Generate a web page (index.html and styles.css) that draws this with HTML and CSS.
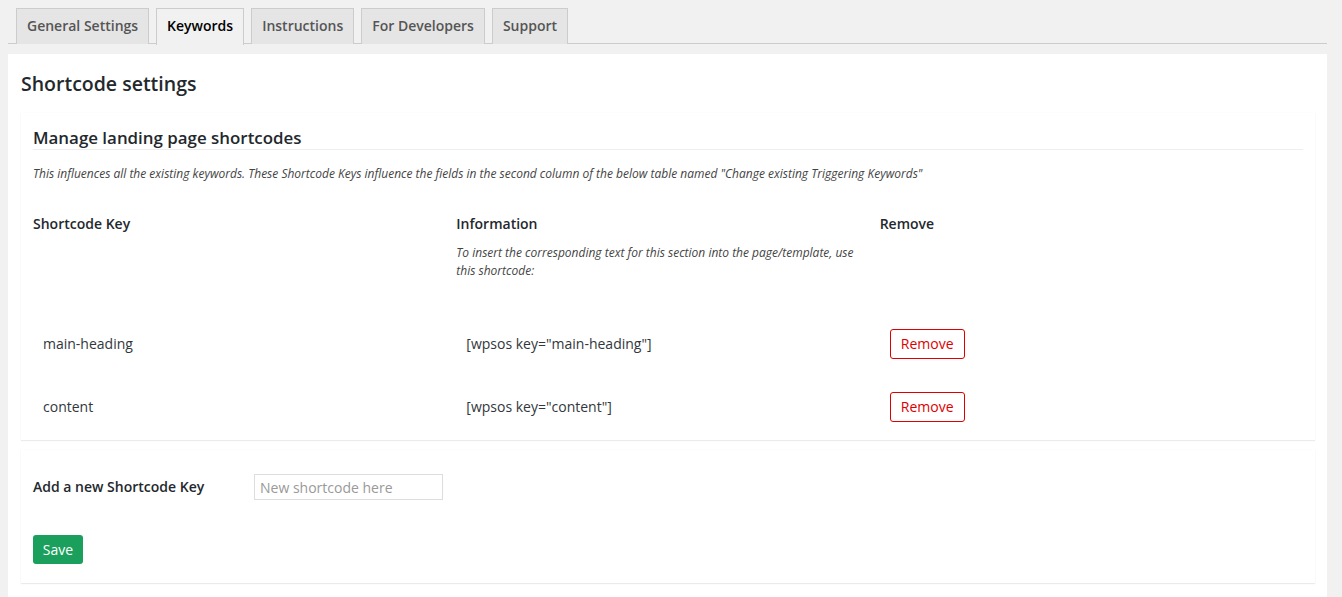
FILE: index.html
```html
<!DOCTYPE html>
<html lang="en">
<head>
<meta charset="utf-8">
<title>Shortcode settings</title>
<link rel="stylesheet" href="styles.css">
</head>
<body>
<div class="wrap">
  <nav class="tabs">
    <a class="tab">General Settings</a>
    <a class="tab active">Keywords</a>
    <a class="tab">Instructions</a>
    <a class="tab">For Developers</a>
    <a class="tab">Support</a>
  </nav>
  <main class="panel">
    <h2 class="title">Shortcode settings</h2>
    <section class="card card-table">
      <h3 class="card-title">Manage landing page shortcodes</h3>
      <p class="desc">This influences all the existing keywords. These Shortcode Keys influence the fields in the second column of the below table named "Change existing Triggering Keywords"</p>
      <div class="table">
        <div class="th">Shortcode Key</div>
        <div class="th">Information
          <p class="hint">To insert the corresponding text for this section into the page/template, use this shortcode:</p>
        </div>
        <div class="th">Remove</div>

        <div class="td">main-heading</div>
        <div class="td">[wpsos key="main-heading"]</div>
        <div class="td"><button class="btn-remove">Remove</button></div>

        <div class="td">content</div>
        <div class="td">[wpsos key="content"]</div>
        <div class="td"><button class="btn-remove">Remove</button></div>
      </div>
    </section>
    <section class="card card-add">
      <div class="add-row">
        <label class="add-label" for="newkey">Add a new Shortcode Key</label>
        <input id="newkey" class="add-input" type="text" placeholder="New shortcode here">
      </div>
      <button class="btn-save">Save</button>
    </section>
  </main>
</div>
</body>
</html>
```

FILE: styles.css
```css
* { box-sizing: border-box; }
html, body { margin: 0; padding: 0; }
body {
  background: #f1f1f1;
  font-family: "Open Sans", "Liberation Sans", sans-serif;
  font-size: 14px;
  color: #444;
  height: 597px;
  overflow: hidden;
}
.wrap {
  padding: 8px 15px 0 8px;
}
.tabs {
  display: flex;
  gap: 7px;
  padding-left: 8px;
  border-bottom: 1px solid #ccc;
  height: 36px;
}
.tab {
  display: block;
  height: 36px;
  padding: 5px 10px;
  font-size: 14px;
  line-height: 24px;
  font-weight: 600;
  color: #555;
  background: #e5e5e5;
  border: 1px solid #ccc;
  border-bottom: none;
}
.tab.active {
  background: #f1f1f1;
  color: #000;
  height: 37px;
}
.panel {
  margin-top: 10px;
  background: #fff;
  padding: 13px 12px 20px 13px;
  height: 600px;
}
.title {
  margin: 0;
  font-size: 19.5px;
  line-height: 34px;
  font-weight: 600;
  color: #23282d;
}
.card {
  background: #fff;
  box-shadow: 0 1px 1px rgba(0,0,0,0.07), 0 0 1px rgba(0,0,0,0.05);
  padding: 0 12px;
}
.card-table {
  margin-top: 12px;
  padding-top: 14px;
  padding-bottom: 2px;
}
.card-title {
  margin: 0;
  font-size: 16.9px;
  line-height: 22px;
  font-weight: 600;
  color: #23282d;
  border-bottom: 1px solid #eee;
}
.desc {
  margin: 15px 0 0;
  font-size: 12px;
  font-style: italic;
  line-height: 18px;
  color: #444;
}
.table {
  display: grid;
  grid-template-columns: 1fr 1fr 1fr;
  margin-top: 31px;
}
.th {
  font-weight: 600;
  font-size: 14px;
  line-height: 20px;
  color: #23282d;
  padding-bottom: 32px;
}
.hint {
  margin: 10px 0 0;
  font-weight: 400;
  font-style: italic;
  font-size: 12px;
  line-height: 18px;
  color: #444;
  max-width: 400px;
}
.td {
  height: 63px;
  padding-left: 10px;
  display: flex;
  align-items: center;
  font-size: 14px;
  color: #32373c;
}
.btn-remove {
  font-family: inherit;
  font-size: 14px;
  height: 30px;
  width: 75px;
  padding: 0;
  background: #fff;
  color: #dd0000;
  border: 1px solid #dd0000;
  border-radius: 3px;
}
.card-add {
  margin-top: 10px;
  padding-top: 24px;
  padding-bottom: 19px;
}
.add-row {
  display: flex;
  align-items: center;
}
.add-label {
  width: 221px;
  font-weight: 600;
  color: #23282d;
  position: relative;
  top: -1px;
}
.add-input {
  width: 189px;
  height: 26px;
  border: 1px solid #ddd;
  font-family: inherit;
  font-size: 14px;
  padding: 0 5px;
  color: #333;
}
.add-input::placeholder { color: #999; }
.btn-save {
  display: block;
  margin-top: 35px;
  height: 29px;
  width: 50px;
  padding: 0;
  font-family: inherit;
  font-size: 14px;
  color: #fff;
  background: #1a9f5c;
  border: none;
  border-radius: 3px;
}
```
